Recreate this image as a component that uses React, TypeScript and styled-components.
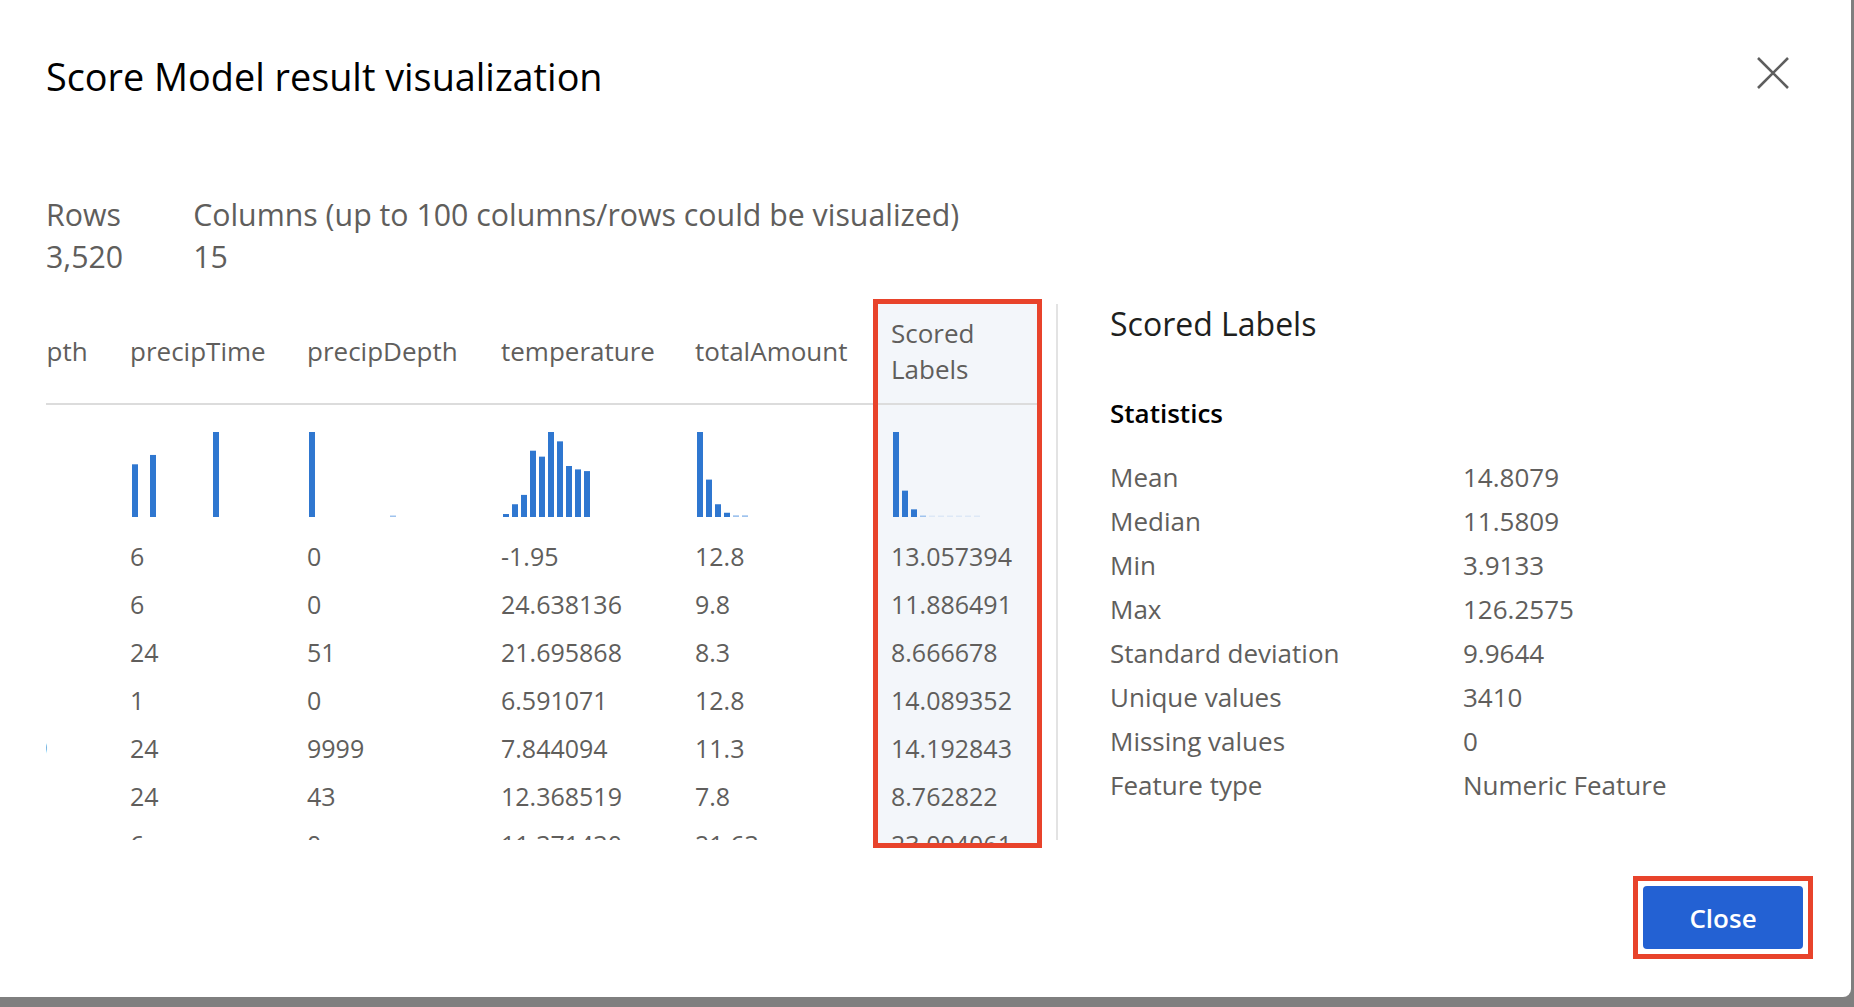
import { Fragment, useLayoutEffect, useRef } from 'react';
import styled, { createGlobalStyle } from 'styled-components';

const GlobalStyle = createGlobalStyle`
  html, body {
    margin: 0;
    padding: 0;
  }
  body {
    background: #7f7f7f;
    font-family: 'Open Sans', 'Noto Sans', 'Liberation Sans', sans-serif;
  }
  * {
    box-sizing: border-box;
  }
`;

type ColumnType = {
  name: string;
  width: number;
  bins: number[];
  values: string[];
  selected?: boolean;
};

const chartHeight = 85;
const textGray = '#605e5c';
const barBlue = '#2f77d0';

const columns: ColumnType[] = [
  {
    name: 'snowDepth',
    width: 181,
    bins: [],
    values: ['0', '0', '0', '0', '9,999.99', '0', '0'],
  },
  {
    name: 'precipTime',
    width: 177,
    bins: [0.62, 0, 0.73, 0, 0, 0, 0, 0, 0, 1],
    values: ['6', '6', '24', '1', '24', '24', '6'],
  },
  {
    name: 'precipDepth',
    width: 194,
    bins: [1, 0, 0, 0, 0, 0, 0, 0, 0, 0.01],
    values: ['0', '0', '51', '0', '9999', '43', '0'],
  },
  {
    name: 'temperature',
    width: 194,
    bins: [0.035, 0.15, 0.26, 0.78, 0.71, 1, 0.89, 0.6, 0.56, 0.54],
    values: [
      '-1.95',
      '24.638136',
      '21.695868',
      '6.591071',
      '7.844094',
      '12.368519',
      '11.371430',
    ],
  },
  {
    name: 'totalAmount',
    width: 192,
    bins: [1, 0.44, 0.15, 0.05, 0.02, 0.02, 0, 0, 0, 0],
    values: ['12.8', '9.8', '8.3', '12.8', '11.3', '7.8', '21.63'],
  },
  {
    name: 'Scored Labels',
    width: 169,
    bins: [1, 0.31, 0.09, 0.015, 0.004, 0.004, 0.004, 0.004, 0.004, 0.004],
    values: [
      '13.057394',
      '11.886491',
      '8.666678',
      '14.089352',
      '14.192843',
      '8.762822',
      '23.004061',
    ],
    selected: true,
  },
];

const statistics: [string, string][] = [
  ['Mean', '14.8079'],
  ['Median', '11.5809'],
  ['Min', '3.9133'],
  ['Max', '126.2575'],
  ['Standard deviation', '9.9644'],
  ['Unique values', '3410'],
  ['Missing values', '0'],
  ['Feature type', 'Numeric Feature'],
];

const Modal = styled.div`
  width: 1851px;
  height: 997px;
  background: #ffffff;
  border-bottom-right-radius: 8px;
  padding: 52px 38px 38px 46px;
  display: flex;
  flex-direction: column;
`;

const HeaderRow = styled.div`
  display: flex;
  justify-content: space-between;
  align-items: flex-start;
`;

const Title = styled.h1`
  margin: 0;
  font-size: 37.8px;
  line-height: 50px;
  font-weight: 400;
  color: #000000;
`;

const DismissButton = styled.button`
  margin: 5px 24px 0 0;
  padding: 0;
  width: 32px;
  height: 32px;
  border: none;
  background: transparent;
  display: flex;
`;

const Summary = styled.div`
  margin-top: 92px;
  display: flex;
  gap: 70px;
`;

const SummaryItem = styled.div`
  display: flex;
  flex-direction: column;
  font-size: 30.3px;
  line-height: 42px;
  color: ${textGray};
`;

const MainRow = styled.div`
  margin-top: 21px;
  height: 549px;
  display: flex;
`;

const ScrollArea = styled.div`
  width: 996px;
  height: 100%;
  overflow: hidden;
  flex-shrink: 0;
`;

const Track = styled.div`
  display: flex;
  align-items: flex-start;
  width: max-content;
`;

const Column = styled.div<{ $width: number; $selected?: boolean }>`
  width: ${(p) => p.$width}px;
  flex-shrink: 0;
  overflow: hidden;
  height: ${(p) => (p.$selected ? 549 : 536)}px;
  margin-top: ${(p) => (p.$selected ? 0 : 5)}px;
  background: ${(p) => (p.$selected ? '#f3f6fa' : 'transparent')};
  border: ${(p) => (p.$selected ? '5px solid #e8432b' : 'none')};
`;

const HeaderCell = styled.div<{ $selected?: boolean }>`
  height: 101px;
  border-bottom: 2px solid #dcdcdc;
  display: flex;
  align-items: center;
  padding: 0 14px 6px ${(p) => (p.$selected ? 13 : 14)}px;
  font-size: 26px;
  line-height: 36px;
  color: ${textGray};
  white-space: ${(p) => (p.$selected ? 'normal' : 'nowrap')};
`;

const HistogramCell = styled.div<{ $selected?: boolean }>`
  height: 127px;
  padding: 27px 0 15px ${(p) => (p.$selected ? 13 : 14)}px;
  display: flex;
`;

const ValueCell = styled.div<{ $selected?: boolean }>`
  height: 48px;
  line-height: 48px;
  padding-left: ${(p) => (p.$selected ? 13 : 14)}px;
  font-size: 25px;
  color: ${textGray};
  white-space: nowrap;
`;

const Divider = styled.div`
  width: 2px;
  height: 536px;
  margin: 5px 0 0 14px;
  background: #e3e3e3;
  flex-shrink: 0;
`;

const StatsPanel = styled.div`
  padding: 3px 0 0 52px;
  display: flex;
  flex-direction: column;
`;

const PanelHeading = styled.h2`
  margin: 0;
  font-size: 32px;
  line-height: 44px;
  font-weight: 400;
  color: #201f1e;
`;

const StatsHeading = styled.h3`
  margin: 49px 0 0;
  font-size: 26px;
  line-height: 36px;
  font-weight: 600;
  color: #000000;
`;

const StatsList = styled.div`
  margin-top: 24px;
  display: grid;
  grid-template-columns: 353px auto;
  font-size: 26px;
  line-height: 44px;
  color: ${textGray};
`;

const Footer = styled.div`
  margin-top: auto;
  display: flex;
  justify-content: flex-end;
`;

const Highlight = styled.div`
  border: 5px solid #e8432b;
  padding: 5px;
  display: flex;
`;

const PrimaryButton = styled.button`
  width: 160px;
  height: 63px;
  border: none;
  border-radius: 4px;
  background: #2361d3;
  color: #ffffff;
  font-family: inherit;
  font-size: 26px;
  font-weight: 600;
`;

function Histogram({ bins }: { bins: number[] }) {
  return (
    <svg width="92" height={chartHeight} viewBox={`0 0 92 ${chartHeight}`}>
      {bins.map((v, i) => {
        if (v <= 0) return null;
        const h = Math.max(1.5, v * chartHeight);
        const fill = v < 0.01 ? '#dde8f6' : v < 0.03 ? '#9fc3ee' : barBlue;
        return (
          <rect
            key={i}
            x={2 + i * 9}
            y={chartHeight - h}
            width={6}
            height={h}
            fill={fill}
          />
        );
      })}
    </svg>
  );
}

export default function App() {
  const scrollRef = useRef<HTMLDivElement>(null);

  useLayoutEffect(() => {
    // table is scrolled all the way right, like in the screenshot
    if (scrollRef.current) {
      scrollRef.current.scrollLeft = scrollRef.current.scrollWidth;
    }
  }, []);

  return (
    <>
      <GlobalStyle />
      <Modal>
        <HeaderRow>
          <Title>Score Model result visualization</Title>
          <DismissButton aria-label="Close dialog">
            <svg width="32" height="32" viewBox="0 0 32 32">
              <path
                d="M1 1L31 31M31 1L1 31"
                stroke="#5e5e5e"
                strokeWidth="2.6"
                fill="none"
              />
            </svg>
          </DismissButton>
        </HeaderRow>

        <Summary>
          <SummaryItem>
            <span>Rows</span>
            <span>3,520</span>
          </SummaryItem>
          <SummaryItem>
            <span>Columns (up to 100 columns/rows could be visualized)</span>
            <span>15</span>
          </SummaryItem>
        </Summary>

        <MainRow>
          <ScrollArea ref={scrollRef}>
            <Track>
              {columns.map((col) => (
                <Column
                  key={col.name}
                  $width={col.width}
                  $selected={col.selected}
                >
                  <HeaderCell $selected={col.selected}>{col.name}</HeaderCell>
                  <HistogramCell $selected={col.selected}>
                    <Histogram bins={col.bins} />
                  </HistogramCell>
                  {col.values.map((value, idx) => (
                    <ValueCell key={idx} $selected={col.selected}>
                      {value}
                    </ValueCell>
                  ))}
                </Column>
              ))}
            </Track>
          </ScrollArea>
          <Divider />
          <StatsPanel>
            <PanelHeading>Scored Labels</PanelHeading>
            <StatsHeading>Statistics</StatsHeading>
            <StatsList>
              {statistics.map(([label, value]) => (
                <Fragment key={label}>
                  <span>{label}</span>
                  <span>{value}</span>
                </Fragment>
              ))}
            </StatsList>
          </StatsPanel>
        </MainRow>

        <Footer>
          <Highlight>
            <PrimaryButton>Close</PrimaryButton>
          </Highlight>
        </Footer>
      </Modal>
    </>
  );
}
